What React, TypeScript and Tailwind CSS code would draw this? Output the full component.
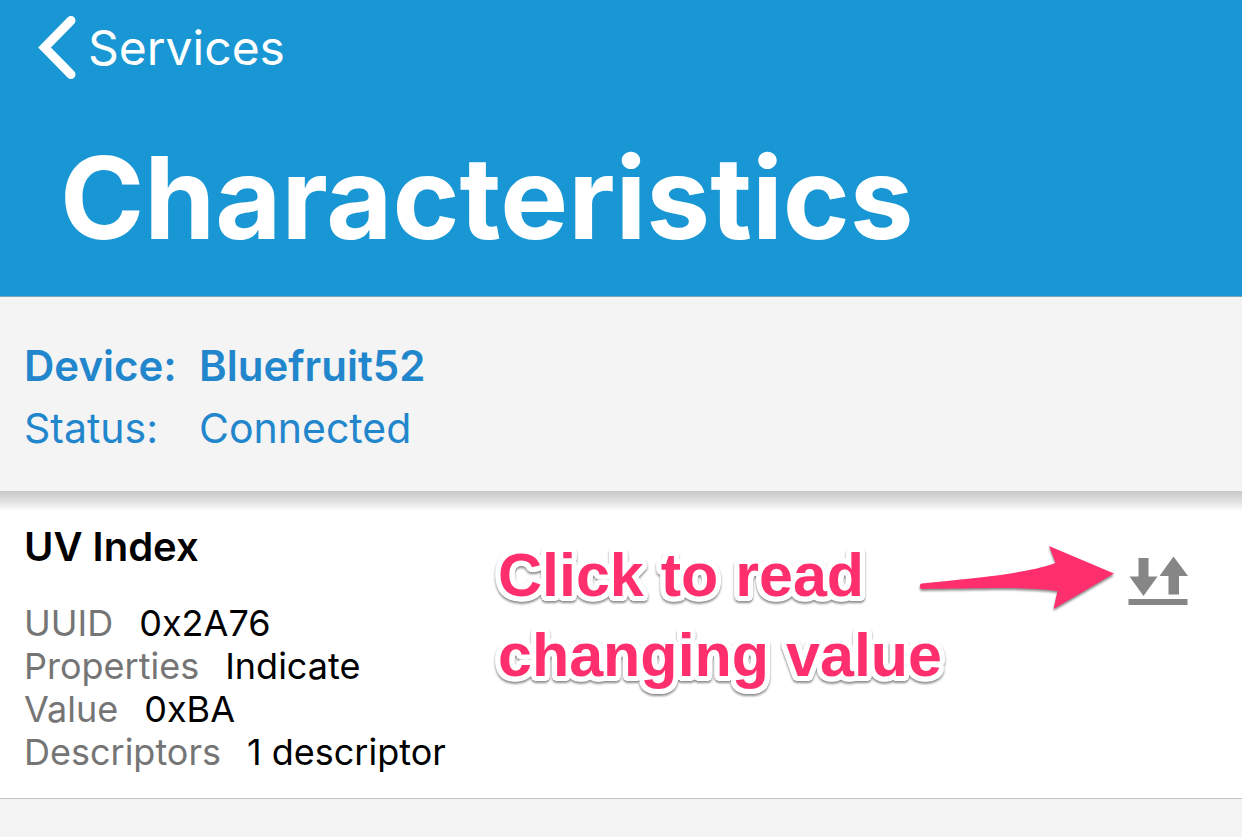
const characteristic = [
  { label: 'UUID', value: '0x2A76' },
  { label: 'Properties', value: 'Indicate' },
  { label: 'Value', value: '0xBA' },
  { label: 'Descriptors', value: '1 descriptor' },
];

function BackIcon() {
  return (
    <svg width="40" height="64" viewBox="0 0 40 64" fill="none" stroke="currentColor" strokeWidth="9" aria-hidden="true">
      <path d="M35 4.500 8.500 31.500 35 58.500" strokeLinecap="round" strokeLinejoin="miter" />
    </svg>
  );
}

function PointerArrow() {
  return (
    <svg
      width="200"
      height="72"
      viewBox="0 0 200 72"
      className="shrink-0 drop-shadow-[0_2px_1px_rgba(0,0,0,0.45)]"
      aria-hidden="true"
    >
      <path
        d="M5.500 40.500C54 35.500 110 31 139.500 20L133 3 198 30.500 137.500 66 141.500 48C110 43 55 46 5.500 46A3 3 0 0 1 5.500 40.500Z"
        fill="#ff2f6d"
      />
    </svg>
  );
}

function ReadIcon() {
  return (
    <svg width="60" height="50" viewBox="0 0 60 50" fill="#868686" aria-hidden="true">
      <path d="M10.500 2H20.500V20.500H29.500L15.500 40 1.500 20.500H10.500Z" />
      <path d="M45.500 0.500 60 20H51V38.500H40.500V20H31.500Z" />
      <path d="M0.500 43H59.500V49H0.500Z" />
    </svg>
  );
}

export default function App() {
  return (
    <div className="min-h-screen bg-[#f4f4f4] font-['Inter',sans-serif] text-black">
      <header className="border-b border-[#7fa5b8] bg-[#1997d4] pt-4 pb-9 text-white">
        <a href="#services" className="flex w-fit items-center gap-3 pl-9 text-[48px] leading-[64px]">
          <BackIcon />
          Services
        </a>
        <h1 className="pt-14 pl-[60px] text-[114px] leading-[124px] font-bold whitespace-nowrap">Characteristics</h1>
      </header>

      <section className="px-6 pt-[38px] pb-8 text-[#2286cd]">
        <dl className="grid grid-cols-[175px_auto] text-[41px] leading-[62px]">
          <dt className="text-[42px] font-semibold">Device:</dt>
          <dd className="text-[42px] font-semibold">Bluefruit52</dd>
          <dt>Status:</dt>
          <dd>Connected</dd>
        </dl>
      </section>

      <main className="border-b border-[#c4c4c4] bg-white">
        <div className="h-5 bg-linear-to-b from-[#c8c8c8] via-[#dfdfdf] to-white" />
        <div className="flex items-start justify-between px-6 pb-6">
          <div className="flex">
            <section className="w-[474px] pt-3">
              <h2 className="text-[40px] leading-[48px] font-semibold">UV Index</h2>
              <dl className="pt-[31px] text-[36px] leading-[43px]">
                {characteristic.map(({ label, value }) => (
                  <div key={label} className="flex gap-[26px]">
                    <dt className="text-[#757575]">{label}</dt>
                    <dd>{value}</dd>
                  </div>
                ))}
              </dl>
            </section>
            <p className="pt-6 font-['Liberation_Sans',sans-serif] text-[61px] leading-[80px] font-bold whitespace-nowrap text-[#ff2f6d] drop-shadow-[0_2px_1px_rgba(0,0,0,0.45)] [text-shadow:5px_0_#fff,5px_2px_#fff,4px_4px_#fff,2px_5px_#fff,0_5px_#fff,-2px_5px_#fff,-4px_4px_#fff,-5px_2px_#fff,-5px_0_#fff,-5px_-2px_#fff,-4px_-4px_#fff,-2px_-5px_#fff,0_-5px_#fff,2px_-5px_#fff,4px_-4px_#fff,5px_-2px_#fff]">
              Click to read
              <br />
              changing value
            </p>
          </div>
          <div className="flex items-start gap-3 pt-8 pr-[30px]">
            <div className="-ml-10">
              <PointerArrow />
            </div>
            <button type="button" aria-label="Read value" className="mt-[13px] shrink-0 cursor-pointer">
              <ReadIcon />
            </button>
          </div>
        </div>
      </main>
    </div>
  );
}
